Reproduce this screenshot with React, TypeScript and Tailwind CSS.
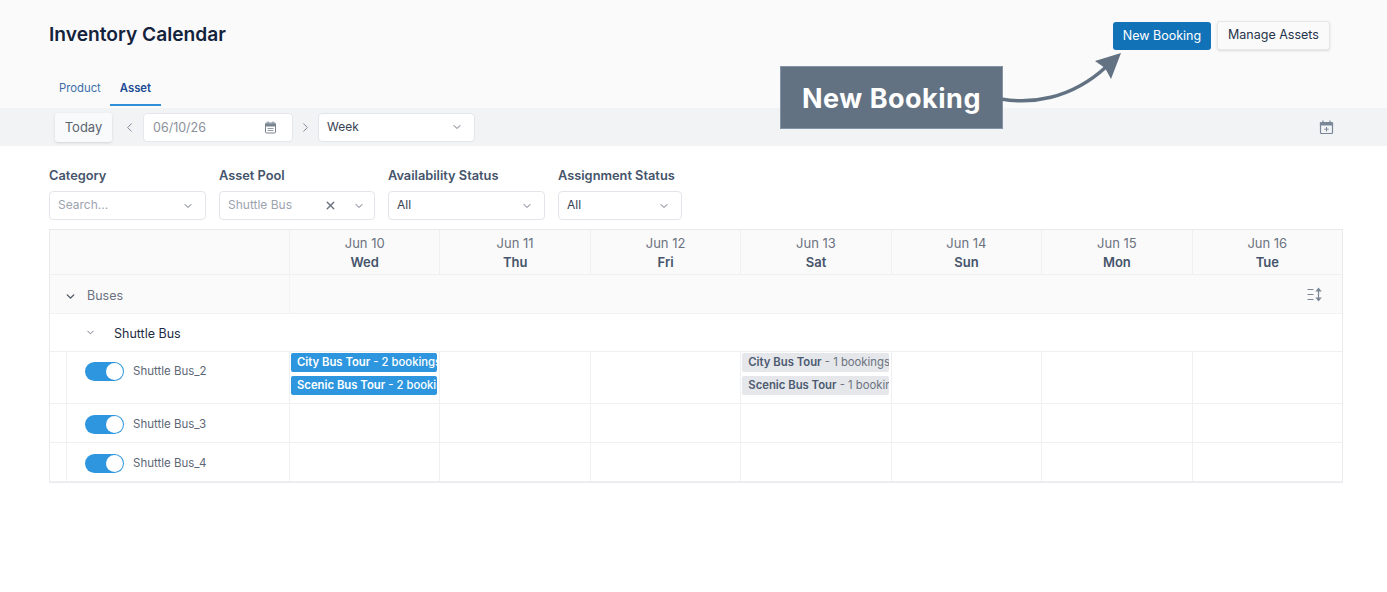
import { ChevronDown, ChevronLeft, ChevronRight, X } from 'lucide-react';

const days = [
  { date: 'Jun 10', day: 'Wed' },
  { date: 'Jun 11', day: 'Thu' },
  { date: 'Jun 12', day: 'Fri' },
  { date: 'Jun 13', day: 'Sat' },
  { date: 'Jun 14', day: 'Sun' },
  { date: 'Jun 15', day: 'Mon' },
  { date: 'Jun 16', day: 'Tue' },
];

const Toggle = () => (
  <div className="flex h-[19px] w-[39px] shrink-0 items-center justify-end rounded-full bg-[#2d96de] pr-[1px]">
    <div className="h-[17px] w-[17px] rounded-full bg-white" />
  </div>
);

const Select = ({ value, width, muted }: { value: string; width: string; muted?: boolean }) => (
  <div className={`flex h-[29px] items-center justify-between rounded border border-[#e2e5ea] bg-white pl-2 pr-[11px] text-[12px] ${width} ${muted ? 'text-[#9ca3af]' : 'text-[#374151]'}`}>
    <span className="-mt-[1px]">{value}</span>
    <ChevronDown size={12} className="text-[#6b7280]" />
  </div>
);

const Filter = ({ label, children }: { label: string; children: React.ReactNode }) => (
  <div className="flex flex-col gap-[7px]">
    <span className="text-[12.8px] leading-[16px] font-semibold text-[#45546b]">{label}</span>
    {children}
  </div>
);

const Chip = ({ name, rest, grey }: { name: string; rest: string; grey?: boolean }) => (
  <div className={`h-[19px] overflow-hidden rounded-[2px] pl-[6px] text-[11.3px] leading-[19px] whitespace-nowrap ${grey ? 'bg-[#e5e7eb] text-[#6b7280]' : 'bg-[#2d96de] font-medium text-white'}`}>
    <span className="font-semibold">
      <span className={grey ? 'text-[#4b5a70]' : ''}>{name}</span>
    </span>{' '}
    - {rest}
  </div>
);

const AssetRow = ({ name, height, top, chips }: { name: string; height: string; top: string; chips?: boolean }) => (
  <div className={`flex ${height} border-b border-[#eff0f2]`}>
    <div className="w-[16px] shrink-0" />
    <div className={`flex w-[223px] shrink-0 items-start gap-[9px] border-l border-[#eff0f2] pl-[18px] ${top}`}>
      <Toggle />
      <span className="mt-[1px] text-[11.5px] leading-[16px] text-[#5d6675]">{name}</span>
    </div>
    <div className="grid flex-1 grid-cols-7">
      {days.map((d, i) => (
        <div key={d.date} className="flex flex-col gap-[4px] border-l border-[#eff0f2] pl-[1px] pr-[2px] pt-[1px]">
          {chips && i === 0 && (
            <>
              <Chip name="City Bus Tour" rest="2 bookings" />
              <Chip name="Scenic Bus Tour" rest="2 bookings" />
            </>
          )}
          {chips && i === 3 && (
            <>
              <Chip grey name="City Bus Tour" rest="1 bookings" />
              <Chip grey name="Scenic Bus Tour" rest="1 bookings" />
            </>
          )}
        </div>
      ))}
    </div>
  </div>
);

export default function App() {
  return (
    <div className="relative min-h-screen bg-white font-['Inter',sans-serif]">
      {/* header */}
      <div className="h-[108px] bg-[#fafafb] pl-[49px] pr-[57px]">
        <div className="flex items-start justify-between pt-[21px]">
          <h1 className="text-[19.2px] leading-[26px] font-semibold text-[#14233c]">Inventory Calendar</h1>
          <div className="flex gap-[6px]">
            <button className="mt-[1px] h-[28px] w-[98px] rounded-[3px] bg-[#1272b8] text-[12.5px] text-white">New Booking</button>
            <button className="h-[29px] w-[113px] rounded-[3px] border border-[#e5e7eb] bg-[#fafafa] text-[12.5px] text-[#26334a] shadow-sm">Manage Assets</button>
          </div>
        </div>
        <div className="mt-[24px] flex text-[11.3px]">
          <div className="flex h-[31px] items-center pb-[2px] pl-[10px] pr-[9px] text-[#3b6ea8]">Product</div>
          <div className="flex h-[32px] items-center border-b-2 border-[#2f8fd8] pb-[2px] pl-[10px] pr-[10px] font-semibold text-[#1c4a94]">Asset</div>
        </div>
      </div>

      {/* toolbar */}
      <div className="flex h-[38px] items-center bg-[#f2f3f5] pl-[55px] pr-[53px]">
        <button className="h-[29px] w-[57px] rounded-[3px] bg-[#f9fafb] pt-[1px] text-[13px] text-[#5a6472] shadow">Today</button>
        <ChevronLeft size={15} strokeWidth={1.5} className="ml-[10px] text-[#7a8494]" />
        <div className="ml-[6px] flex h-[29px] w-[150px] items-center justify-between rounded border border-[#e5e7eb] bg-white pl-[9px] pr-[15px] text-[12.5px] text-[#8a919c]">
          <span className="pt-[2px]">06/10/26</span>
          <svg width="13" height="13" viewBox="0 0 13 13" fill="none" stroke="#7b8490">
            <rect x="1.5" y="2" width="10" height="10" rx="1" />
            <path d="M1.5 3h10v2h-10z" fill="#7b8490" />
            <path d="M3.5 7.5h6M3.5 9.5h6" strokeWidth="0.8" />
            <path d="M4 0.5v2M9 0.5v2" />
          </svg>
        </div>
        <ChevronRight size={15} strokeWidth={1.5} className="ml-[5px] text-[#7a8494]" />
        <div className="ml-[5px]">
          <Select value="Week" width="w-[157px]" />
        </div>
        <svg className="ml-auto" width="15" height="15" viewBox="0 0 15 15" fill="none" stroke="#7a8798" strokeWidth="1.2">
          <rect x="1.5" y="2.5" width="12" height="11" rx="1" />
          <path d="M1.5 3h12v2h-12z" fill="#7a8798" />
          <path d="M4 0.5v2M11 0.5v2" />
          <path d="M7.5 7v4.5M5.3 9.2h4.4" strokeWidth="1" />
        </svg>
      </div>

      {/* filters */}
      <div className="flex pl-[49px] pt-[22px]">
        <Filter label="Category">
          <Select value="Search..." width="w-[157px]" muted />
        </Filter>
        <div className="ml-[13px]">
          <Filter label="Asset Pool">
            <div className="flex h-[29px] w-[156px] items-center rounded border border-[#e2e5ea] bg-white pl-2 pr-[9px] text-[12px] text-[#9ca3af]">
              <span className="-mt-[1px]">Shuttle Bus</span>
              <X size={13} strokeWidth={2.5} className="ml-auto text-[#6b7280]" />
              <ChevronDown size={12} className="ml-[16px] text-[#6b7280]" />
            </div>
          </Filter>
        </div>
        <div className="ml-[13px]">
          <Filter label="Availability Status">
            <Select value="All" width="w-[157px]" />
          </Filter>
        </div>
        <div className="ml-[13px]">
          <Filter label="Assignment Status">
            <Select value="All" width="w-[124px]" />
          </Filter>
        </div>
      </div>

      {/* calendar */}
      <div className="ml-[49px] mt-[9px] w-[1294px] border border-[#e9eaed]">
        <div className="flex h-[45px] border-b border-[#eff0f2] bg-[#fafafa]">
          <div className="w-[239px] shrink-0" />
          <div className="grid flex-1 grid-cols-7">
            {days.map((d) => (
              <div key={d.date} className="flex flex-col items-center border-l border-[#eff0f2] pt-[4px] text-[13px] leading-[19px]">
                <span className="text-[#6b7280]">{d.date}</span>
                <span className="font-semibold text-[#45546b]">{d.day}</span>
              </div>
            ))}
          </div>
        </div>
        <div className="flex h-[39px] border-b border-[#f1f2f4] bg-[#fafafa]">
          <div className="flex w-[239px] shrink-0 items-center gap-[10px] pl-[14px] pt-[5px]">
            <ChevronDown size={13} strokeWidth={2.5} className="text-[#4b5563]" />
            <span className="text-[12.5px] text-[#6b7280]">Buses</span>
          </div>
          <div className="flex flex-1 items-center justify-end border-l border-[#f3f4f6] pr-[20px]">
            <svg width="15" height="15" viewBox="0 0 15 15" fill="none" stroke="#7b8797" strokeWidth="1.2">
              <path d="M0.5 2.5h6M0.5 7.5h6M0.5 12.5h6" />
              <path d="M11.5 2v11" />
              <path d="M9.5 4l2-2.5 2 2.5zM9.5 11l2 2.5 2-2.5z" fill="#7b8797" />
            </svg>
          </div>
        </div>
        <div className="flex h-[38px] items-center border-b border-[#eff0f2] pl-[35px] pt-[3px]">
          <ChevronDown size={11} className="-mt-[3px] text-[#6b7280]" />
          <span className="ml-[18px] text-[12.5px] text-[#1d2c44]">Shuttle Bus</span>
        </div>
        <AssetRow name="Shuttle Bus_2" height="h-[52px]" top="pt-[10px]" chips />
        <AssetRow name="Shuttle Bus_3" height="h-[39px]" top="pt-[11px]" />
        <AssetRow name="Shuttle Bus_4" height="h-[39px]" top="pt-[11px]" />
      </div>

      {/* callout */}
      <div className="absolute left-[780px] top-[66px] flex h-[63px] w-[223px] items-center justify-center border border-[#8494a6] bg-[#637282] pt-[3px] text-[27px] font-bold tracking-[0.5px] text-white">
        New Booking
      </div>
      <svg className="absolute left-[1000px] top-[50px]" width="125" height="56" viewBox="0 0 125 56" fill="none">
        <path d="M1 49C30 54 70 50 106 17" stroke="#637282" strokeWidth="3.5" />
        <path d="M121 3L95 11L105 18L111 29z" fill="#637282" />
      </svg>
    </div>
  );
}
